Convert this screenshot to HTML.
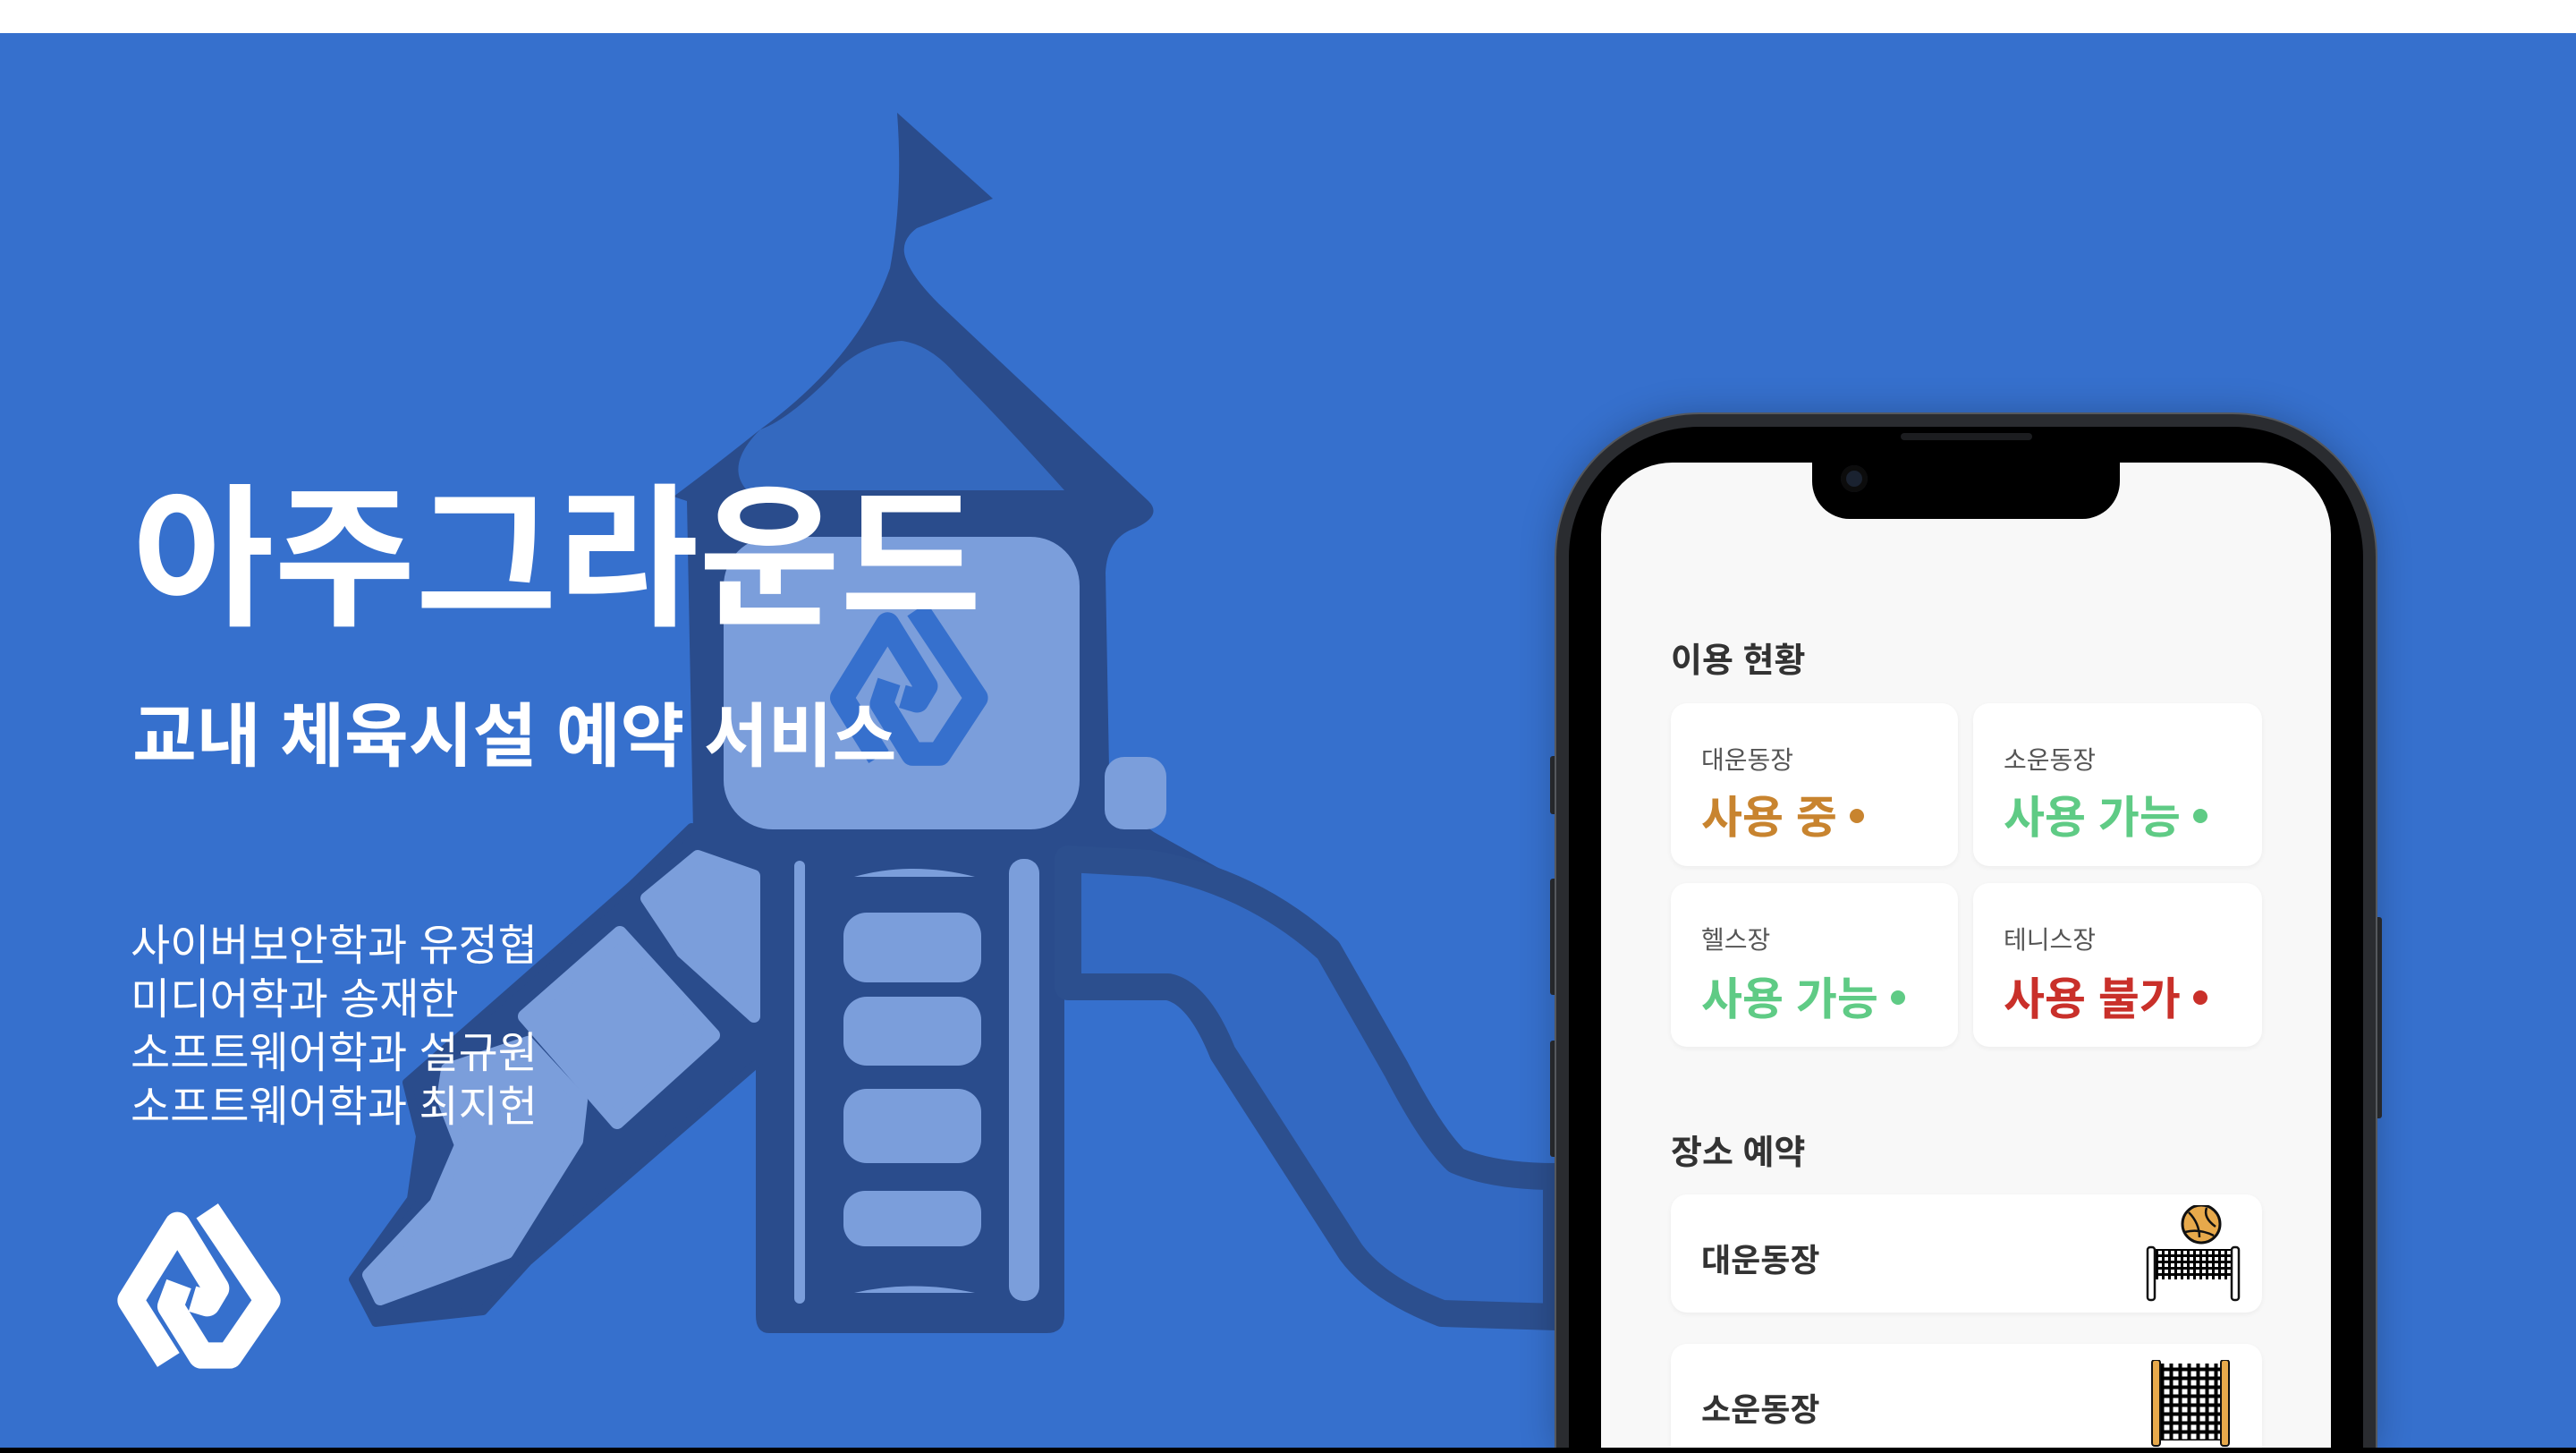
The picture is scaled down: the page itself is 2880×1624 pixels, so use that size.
<!DOCTYPE html>
<html><head><meta charset="utf-8"><style>
*{margin:0;padding:0;box-sizing:border-box}
html,body{width:2880px;height:1624px;overflow:hidden;background:#fff}
body{position:relative;font-family:"Liberation Sans","Noto Sans CJK KR",sans-serif}
.bg{position:absolute;left:0;top:37px;width:2880px;height:1581px;background:#3670CD;overflow:hidden}
.bottom{position:absolute;left:0;top:1618px;width:2880px;height:6px;background:#000}
.t{position:absolute;color:#fff;white-space:nowrap}
.clip{position:absolute;left:0;top:0;width:2880px;height:1618px;overflow:hidden}
.phone{position:absolute;left:1740px;top:463px;width:916px;height:1157px;border-radius:160px 160px 0 0;background:#000;border:14px solid #2a2c30;border-bottom:0;box-shadow:0 0 0 2px #55585d, 0 0 40px rgba(0,0,0,.25)}
.screen{position:absolute;left:1790px;top:517px;width:816px;height:1101px;background:#f8f8f8;border-radius:80px 80px 0 0;overflow:hidden}
.notch{position:absolute;left:236px;top:0;width:344px;height:63px;background:#000;border-radius:0 0 42px 42px}
.cam{position:absolute;width:30px;height:30px;border-radius:50%;background:#1a2230;box-shadow:inset 0 0 0 6px #0c0c0c}
.h{position:absolute;left:78px;font-size:38px;font-weight:bold;color:#333}
.card{position:absolute;background:#fff;border-radius:18px;box-shadow:0 2px 6px rgba(0,0,0,.05)}
.lab{position:absolute;left:34px;font-size:28px;color:#555}
.st{position:absolute;left:34px;font-size:50px;font-weight:bold}
.st i{display:inline-block;width:16px;height:16px;border-radius:50%;margin-left:14px;vertical-align:middle;position:relative;top:-6px}
.btn{position:absolute;background:#2a2c30;border-radius:3px}
</style></head><body>
<div class="bg">
<svg width="2880" height="1581" viewBox="0 37 2880 1581" style="position:absolute;left:0;top:0">
 <g fill="#2A4C8C">
  <path d="M1003 126 L1110 222 L1025 255 Q1005 270 1013 290 Q1020 310 1050 340 L1284 560 Q1300 576 1270 590 Q1238 600 1236 640 L1240 860 Q1250 900 1290 930 L1380 980 L1360 1000 L1240 960 L1190 970 L1190 1470 Q1190 1490 1170 1490 L860 1490 Q845 1490 845 1470 L845 980 L800 960 L775 930 L768 560 L753 555 Q800 520 850 480 Q960 400 995 300 Q1010 220 1003 126 Z"/>
 </g>
 <path d="M1008 381 Q960 385 930 420 Q880 470 850 480 Q810 520 835 548 L1190 548 Q1120 470 1070 420 Q1040 385 1008 381 Z" fill="#3469BF"/>
 <rect x="809" y="600" width="398" height="327" rx="55" fill="#7B9EDB"/>
 <rect x="1235" y="846" width="69" height="81" rx="22" fill="#7B9EDB"/>
 <g fill="#7B9EDB">
  <rect x="888" y="962" width="12" height="495" rx="6"/>
  <rect x="1128" y="960" width="34" height="494" rx="16"/>
  <rect x="943" y="1020" width="154" height="78" rx="26"/>
  <rect x="943" y="1114" width="154" height="77" rx="26"/>
  <rect x="943" y="1217" width="154" height="83" rx="26"/>
  <rect x="943" y="1331" width="154" height="62" rx="24"/>
  <path d="M955 980 Q1020 962 1090 980 Z"/>
  <path d="M955 1445 Q1020 1430 1090 1445 Z"/>
 </g>
 <g transform="translate(895,648) scale(0.33)" fill="none" stroke="#3670CD" stroke-width="80" stroke-linejoin="round">
  <path d="M265 600 L140 400 L295 150 L425 360 L395 410 L345 395"/>
  <path d="M395 100 L595 400 L470 590 L380 590 L275 420 L300 345"/>
 </g>
 <path d="M1194 960 L1286 965 Q1400 985 1485 1062 L1561 1195 Q1600 1270 1628 1297 Q1670 1315 1740 1315 L1740 1472 L1612 1468 Q1540 1440 1510 1399 L1367 1177 Q1340 1110 1306 1103 L1194 1103 Z" fill="#3369C2" stroke="#2C4F8E" stroke-width="30" stroke-linejoin="round"/>
 <path d="M773 925 L850 935 L850 1185 L590 1410 L540 1465 L420 1478 L395 1430 L460 1340 L470 1270 L455 1210 L707 989 Z" fill="#2A4C8C" stroke="#2A4C8C" stroke-width="10" stroke-linejoin="round"/>
 <path d="M723 1004 L780 957 L843 979 L843 1136 L763 1064 Z" fill="#7B9EDB" stroke="#7B9EDB" stroke-width="14" stroke-linejoin="round"/>
 <path d="M587 1136 L693 1043 L797 1157 L690 1254 Z" fill="#7B9EDB" stroke="#7B9EDB" stroke-width="16" stroke-linejoin="round"/>
 <path d="M500 1195 L590 1165 L650 1230 L645 1275 L567 1400 L425 1452 L412 1425 L487 1345 L515 1280 L495 1228 Z" fill="#7B9EDB" stroke="#7B9EDB" stroke-width="14" stroke-linejoin="round"/>
</svg>

<div class="t" style="left:148px;top:448px;font-size:172px;font-weight:bold;letter-spacing:0px">아주그라운드</div>
<div class="t" style="left:148px;top:724px;font-size:78px;font-weight:bold">교내 체육시설 예약 서비스</div>
<div class="t" style="left:146px;top:991px;font-size:48px;line-height:60px">사이버보안학과 유정협<br>미디어학과 송재한<br>소프트웨어학과 설규원<br>소프트웨어학과 최지헌</div>

<svg style="position:absolute;left:100px;top:1283px" width="240" height="240" viewBox="0 0 720 720">
 <g fill="none" stroke="#fff" stroke-width="88" stroke-linejoin="round">
  <path d="M265 600 L138 400 L295 148 L425 360 L395 410 L345 395"/>
  <path d="M395 100 L597 400 L470 585 L375 585 L272 420 L300 345"/>
 </g>
</svg>
</div>
<div class="bottom"></div>

<div class="clip">
<div class="btn" style="left:1733px;top:845px;width:8px;height:65px"></div>
<div class="btn" style="left:1733px;top:982px;width:8px;height:130px"></div>
<div class="btn" style="left:1733px;top:1163px;width:8px;height:130px"></div>
<div class="btn" style="left:2655px;top:1025px;width:8px;height:225px"></div>
<div class="phone"></div>
<div style="position:absolute;left:2125px;top:484px;width:147px;height:8px;border-radius:4px;background:#1c1d20"></div>
<div class="screen">
 <div class="notch"><div class="cam" style="left:32px;top:3px"></div></div>
 <div class="h" style="top:190px">이용 현황</div>
 <div class="card" style="left:78px;top:269px;width:321px;height:182px">
  <div class="lab" style="top:42px">대운동장</div>
  <div class="st" style="top:88px;color:#C8842F">사용 중<i style="background:#C8842F"></i></div>
 </div>
 <div class="card" style="left:416px;top:269px;width:323px;height:182px">
  <div class="lab" style="top:42px">소운동장</div>
  <div class="st" style="top:88px;color:#5FCB85">사용 가능<i style="background:#5FCB85"></i></div>
 </div>
 <div class="card" style="left:78px;top:470px;width:321px;height:183px">
  <div class="lab" style="top:42px">헬스장</div>
  <div class="st" style="top:90px;color:#5FCB85">사용 가능<i style="background:#5FCB85"></i></div>
 </div>
 <div class="card" style="left:416px;top:470px;width:323px;height:183px">
  <div class="lab" style="top:42px">테니스장</div>
  <div class="st" style="top:90px;color:#C9302A">사용 불가<i style="background:#C9302A"></i></div>
 </div>
 <div class="h" style="top:740px">장소 예약</div>
 <div class="card" style="left:78px;top:818px;width:661px;height:132px">
  <div style="position:absolute;left:34px;top:45px;font-size:36px;font-weight:bold;color:#333">대운동장</div>
  <svg style="position:absolute;left:529px;top:12px" width="112" height="112" viewBox="0 0 112 112">
   <defs><pattern id="g1" width="7" height="7" patternUnits="userSpaceOnUse"><rect width="7" height="7" fill="#000"/><rect x="2" y="2" width="4" height="4" fill="#fff"/></pattern>
   <pattern id="g2" width="10" height="10" patternUnits="userSpaceOnUse"><rect width="10" height="10" fill="#000"/><rect x="2.5" y="2.5" width="6" height="6" fill="#fff"/></pattern></defs>
   <circle cx="64" cy="21" r="21" fill="#E7A94B" stroke="#111" stroke-width="3"/>
   <path d="M50 8 Q62 20 62 36 M70 3 Q66 14 80 24 M46 30 Q62 26 78 34" fill="none" stroke="#111" stroke-width="2.5"/>
   <rect x="11" y="49" width="87" height="34" fill="url(#g1)"/>
   <rect x="4" y="47" width="8" height="59" rx="3" fill="#fff" stroke="#111" stroke-width="2.5"/>
   <rect x="98" y="47" width="8" height="59" rx="3" fill="#fff" stroke="#111" stroke-width="2.5"/>
  </svg>
 </div>
 <div class="card" style="left:78px;top:985px;width:661px;height:116px;border-radius:18px 18px 0 0">
  <div style="position:absolute;left:34px;top:45px;font-size:36px;font-weight:bold;color:#333">소운동장</div>
  <svg style="position:absolute;left:529px;top:18px" width="112" height="98" viewBox="0 0 112 98">
   <rect x="18" y="4" width="74" height="86" fill="url(#g2)"/>
   <rect x="9" y="0" width="9" height="96" rx="3" fill="#E7A94B" stroke="#111" stroke-width="2"/>
   <rect x="86" y="0" width="9" height="96" rx="3" fill="#E7A94B" stroke="#111" stroke-width="2"/>
  </svg>
 </div>
</div>
</div>
</body></html>
